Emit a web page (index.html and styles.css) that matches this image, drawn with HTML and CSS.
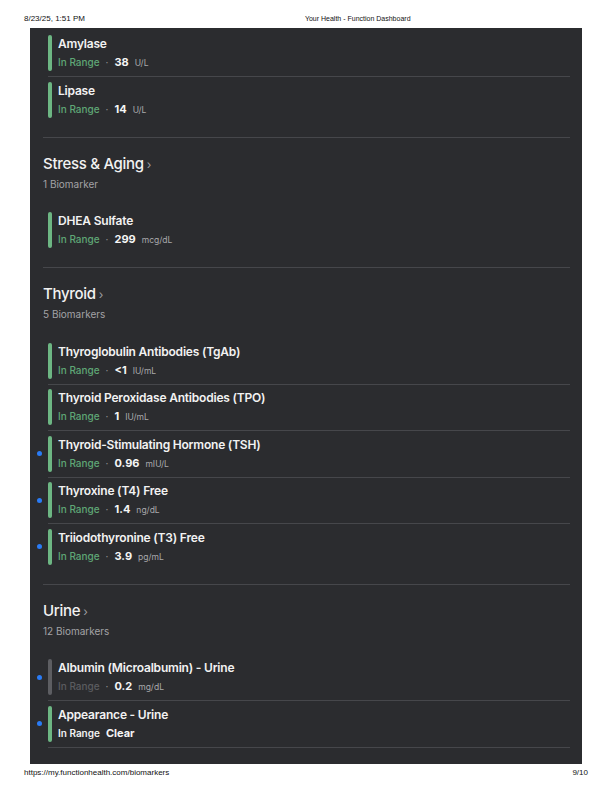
FILE: index.html
```html
<!DOCTYPE html>
<html lang="en">
<head>
<meta charset="utf-8">
<title>Your Health - Function Dashboard</title>
<link rel="stylesheet" href="styles.css">
</head>
<body>
<header class="print-head">
  <span class="date">8/23/25, 1:51 PM</span>
  <span class="doc-title">Your Health - Function Dashboard</span>
</header>

<main class="panel">
  <ul class="list">
    <li class="item">
      <span class="bar"></span>
      <div class="info">
        <div class="name">Amylase</div>
        <div class="status"><span class="range">In Range</span><span class="sep">·</span><span class="val">38</span><span class="unit">U/L</span></div>
      </div>
    </li>
    <li class="item">
      <span class="bar"></span>
      <div class="info">
        <div class="name">Lipase</div>
        <div class="status"><span class="range">In Range</span><span class="sep">·</span><span class="val">14</span><span class="unit">U/L</span></div>
      </div>
    </li>
  </ul>

  <section class="group">
    <h2 class="group-title">Stress &amp; Aging<span class="chev">›</span></h2>
    <p class="count">1 Biomarker</p>
    <ul class="list">
      <li class="item">
        <span class="bar"></span>
        <div class="info">
          <div class="name">DHEA Sulfate</div>
          <div class="status"><span class="range">In Range</span><span class="sep">·</span><span class="val">299</span><span class="unit">mcg/dL</span></div>
        </div>
      </li>
    </ul>
  </section>

  <section class="group">
    <h2 class="group-title">Thyroid<span class="chev">›</span></h2>
    <p class="count">5 Biomarkers</p>
    <ul class="list">
      <li class="item">
        <span class="bar"></span>
        <div class="info">
          <div class="name">Thyroglobulin Antibodies (TgAb)</div>
          <div class="status"><span class="range">In Range</span><span class="sep">·</span><span class="val">&lt;1</span><span class="unit">IU/mL</span></div>
        </div>
      </li>
      <li class="item">
        <span class="bar"></span>
        <div class="info">
          <div class="name">Thyroid Peroxidase Antibodies (TPO)</div>
          <div class="status"><span class="range">In Range</span><span class="sep">·</span><span class="val">1</span><span class="unit">IU/mL</span></div>
        </div>
      </li>
      <li class="item new">
        <span class="bar"></span>
        <div class="info">
          <div class="name">Thyroid-Stimulating Hormone (TSH)</div>
          <div class="status"><span class="range">In Range</span><span class="sep">·</span><span class="val">0.96</span><span class="unit">mIU/L</span></div>
        </div>
      </li>
      <li class="item new">
        <span class="bar"></span>
        <div class="info">
          <div class="name">Thyroxine (T4) Free</div>
          <div class="status"><span class="range">In Range</span><span class="sep">·</span><span class="val">1.4</span><span class="unit">ng/dL</span></div>
        </div>
      </li>
      <li class="item new">
        <span class="bar"></span>
        <div class="info">
          <div class="name">Triiodothyronine (T3) Free</div>
          <div class="status"><span class="range">In Range</span><span class="sep">·</span><span class="val">3.9</span><span class="unit">pg/mL</span></div>
        </div>
      </li>
    </ul>
  </section>

  <section class="group">
    <h2 class="group-title">Urine<span class="chev">›</span></h2>
    <p class="count">12 Biomarkers</p>
    <ul class="list more">
      <li class="item new muted">
        <span class="bar"></span>
        <div class="info">
          <div class="name">Albumin (Microalbumin) - Urine</div>
          <div class="status"><span class="range">In Range</span><span class="sep">·</span><span class="val">0.2</span><span class="unit">mg/dL</span></div>
        </div>
      </li>
      <li class="item new">
        <span class="bar"></span>
        <div class="info">
          <div class="name">Appearance - Urine</div>
          <div class="status"><span class="range strong">In Range</span><span class="val">Clear</span></div>
        </div>
      </li>
    </ul>
  </section>
</main>

<footer class="print-foot">
  <span>https://my.functionhealth.com/biomarkers</span>
  <span>9/10</span>
</footer>
</body>
</html>
```

FILE: styles.css
```css
* { box-sizing: border-box; }

html, body {
  margin: 0;
  padding: 0;
  background: #ffffff;
}

body {
  width: 612px;
  height: 792px;
  overflow: hidden;
  font-family: Inter, "Noto Sans", sans-serif;
}

.print-head {
  height: 28px;
  padding: 14px 24px 0 24px;
  display: flex;
  align-items: baseline;
  font-family: "Liberation Sans", Arial, sans-serif;
  font-size: 8px;
  line-height: 10px;
  color: #111;
}

.doc-title {
  margin-left: 220px;
  font-size: 7px;
}

.panel {
  margin-left: 30px;
  width: 552px;
  height: 736px;
  overflow: hidden;
  background: #2b2c2f;
  padding: 2.5px 12px 0 13px;
}

.list {
  list-style: none;
  margin: 0;
  padding: 0 0 14px 5px;
}

.item {
  position: relative;
  display: flex;
  gap: 6px;
  padding: 4.75px 0;
  border-bottom: 1px solid #46474b;
}

.list .item:last-child {
  border-bottom: none;
}

.list.more .item:last-child {
  border-bottom: 1px solid #46474b;
}

.item.new::before {
  content: "";
  position: absolute;
  left: -11px;
  top: 50%;
  width: 5px;
  height: 5px;
  margin-top: -2.5px;
  border-radius: 50%;
  background: #2a7cf6;
}

.bar {
  flex: none;
  width: 4px;
  height: 36px;
  border-radius: 2px;
  background: #6db683;
}

.info {
  display: flex;
  flex-direction: column;
}

.name {
  font-size: 12px;
  line-height: 18px;
  font-weight: 600;
  color: #f2f2f2;
  letter-spacing: -0.2px;
}

.status {
  display: flex;
  align-items: baseline;
  gap: 6px;
  height: 18px;
  font-size: 10px;
  line-height: 18px;
}

.range {
  color: #5fa776;
  font-weight: 500;
}

.range.strong {
  color: #f2f2f2;
  font-weight: 600;
}

.sep {
  color: #8c8c8f;
}

.val {
  color: #f5f5f5;
  font-weight: 700;
  font-size: 11px;
}

.unit {
  color: #a9a9ac;
  font-size: 8.5px;
}

.item.muted .bar {
  background: #5d5e62;
}

.item.muted .range {
  color: #5b5c60;
}

.group {
  border-top: 1px solid #46474b;
  padding-top: 16px;
}

.group-title {
  margin: 0;
  font-size: 15px;
  line-height: 20px;
  font-weight: 500;
  color: #f2f2f2;
  letter-spacing: -0.3px;
}

.chev {
  margin-left: 3px;
  font-size: 12px;
  font-weight: 400;
  color: #9d9da0;
}

.count {
  margin: 2px 0 17px 0;
  font-size: 10px;
  line-height: 14px;
  color: #a3a3a6;
}

.print-foot {
  display: flex;
  justify-content: space-between;
  padding: 4px 24px 0 24px;
  font-family: "Liberation Sans", Arial, sans-serif;
  font-size: 8px;
  line-height: 10px;
  color: #111;
}
```
